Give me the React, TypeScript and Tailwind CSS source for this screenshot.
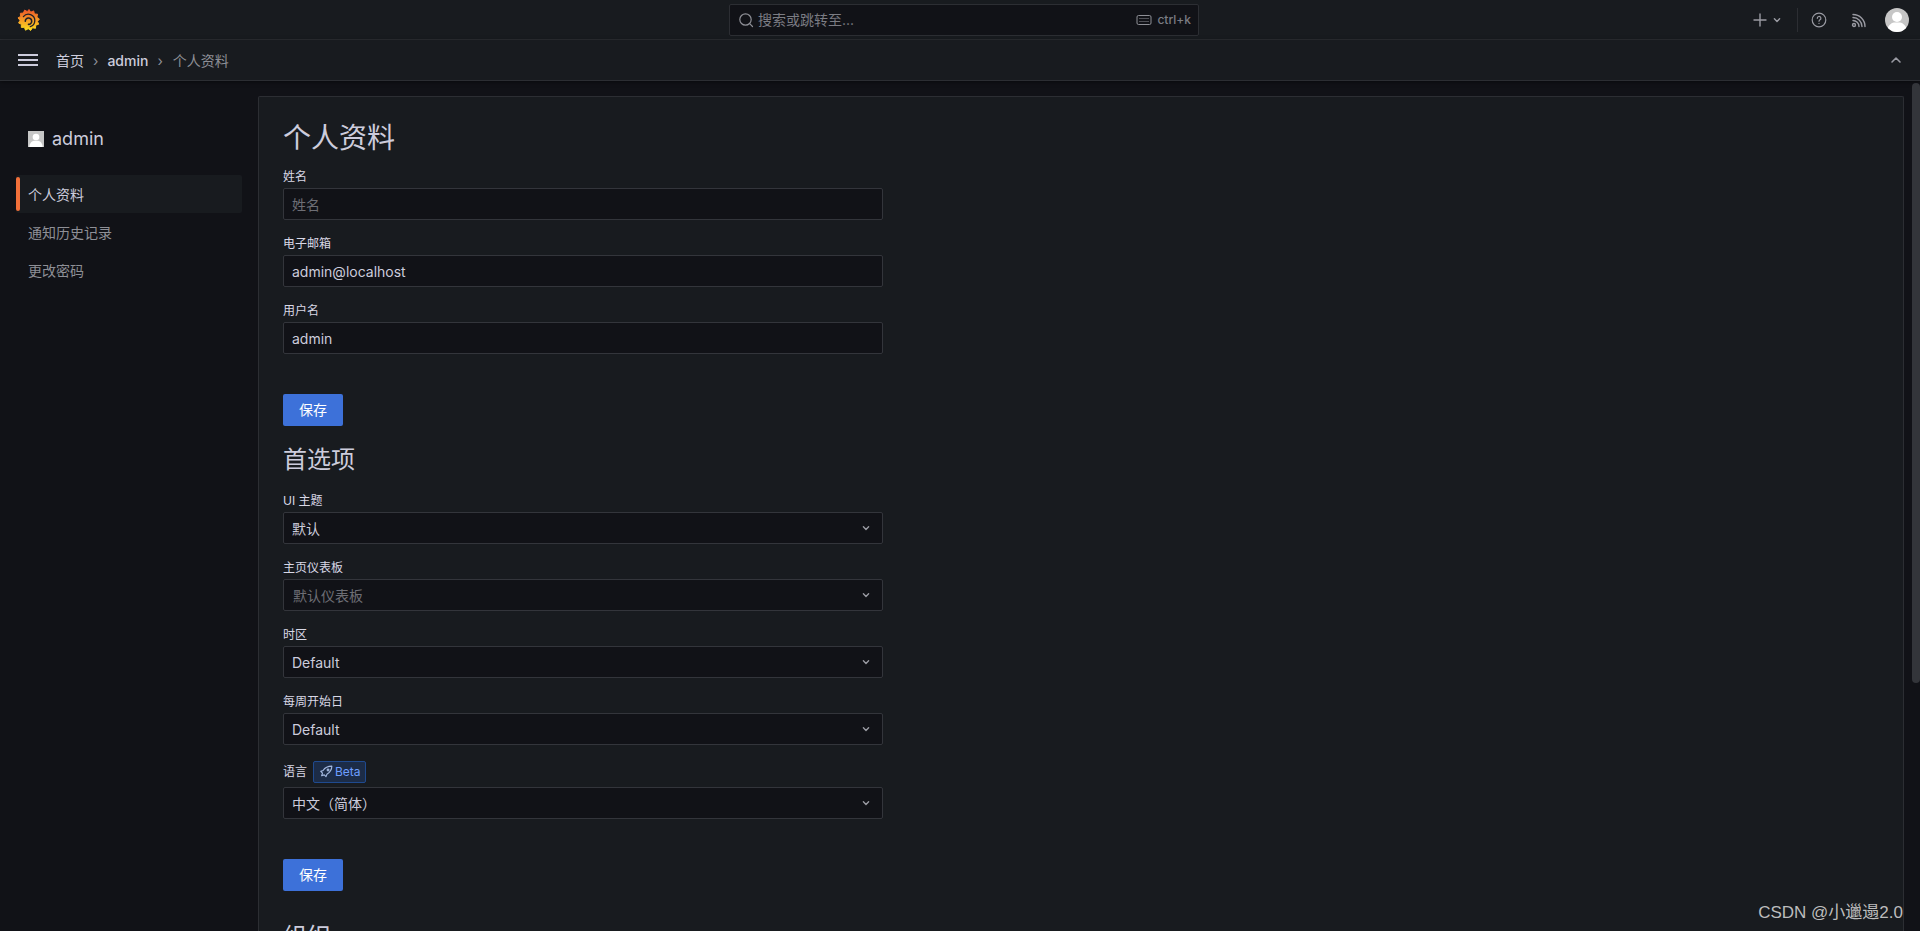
const uiFont = { fontFamily: 'Inter, "Noto Sans CJK SC", sans-serif' }

const GrafanaLogo = () => (
    <svg width="24" height="24" viewBox="0 0 24 24">
        <defs>
            <linearGradient id="grafana-grad" x1="0.5" y1="1" x2="0.5" y2="0">
                <stop offset="0" stopColor="#fcdf1f" />
                <stop offset="1" stopColor="#f0562a" />
            </linearGradient>
        </defs>
        <path
            d="M13 1.500l1.700 2.700 3-1.300.7 3.100 3.100.2-.6 3.100 2.500 1.700-1.900 2.400 1.200 2.800-3 1-.2 3.100-3.100-.5-1.700 2.600-2.500-1.700-2.700 1.500-1.100-2.900-3.100.1.100-3.100-2.800-1.300 1.400-2.700-2-2.400 2.700-1.500-.4-3.100 3.100-.3 1.200-2.900 2.700 1.500z"
            fill="url(#grafana-grad)"
            stroke="url(#grafana-grad)"
            strokeWidth="1"
            strokeLinejoin="round"
        />
        <path
            d="M7.400 8.600A6.400 6.400 0 0 1 18.800 13a6.400 6.400 0 0 1-4.500 5.700"
            fill="none"
            stroke="#20202a"
            strokeWidth="1.300"
            strokeLinecap="round"
        />
        <path
            d="M9.300 13.300a3.200 3.200 0 1 1 3.200 3.100"
            fill="none"
            stroke="#20202a"
            strokeWidth="1.600"
            strokeLinecap="round"
        />
    </svg>
)

const Chevron = ({ className }: { className: string }) => (
    <svg className={className} width="16" height="16" viewBox="0 0 16 16" fill="none" stroke="currentColor" strokeWidth="1.400" strokeLinecap="round" strokeLinejoin="round">
        <path d="M5.400 6.800 8 9.400l2.600-2.600" />
    </svg>
)

const Avatar = ({ className }: { className: string }) => (
    <svg className={className} viewBox="0 0 24 24">
        <rect width="24" height="24" fill="#c6c6c6" />
        <circle cx="12" cy="9" r="5" fill="#fff" />
        <path d="M2 24c0-6 4-9 7-9.500h6c3 .5 7 3.500 7 9.500z" fill="#fff" />
    </svg>
)

const Field = ({ label, value, placeholder }: { label: string; value?: string; placeholder?: string }) => (
    <div className="mb-[16px] w-[600px]">
        <div className="mb-[4px] h-[15px] text-[12px] leading-[15px] text-[#d8d8e6]">{label}</div>
        <div className="flex h-[32px] items-center rounded-[2px] border border-[#33353b] bg-[#111217] px-[8px] text-[14px]">
            {value ? <span className="text-[#ccccdc]">{value}</span> : <span className="text-[#6d6e75]">{placeholder}</span>}
        </div>
    </div>
)

const SelectField = ({ label, value, muted, badge }: { label: string; value: string; muted?: boolean; badge?: boolean }) => (
    <div className="mb-[16px] w-[600px]">
        <div className={badge ? 'mb-[4px] flex h-[22px] items-center gap-[6px] text-[12px] text-[#d8d8e6]' : 'mb-[4px] h-[15px] text-[12px] leading-[15px] text-[#d8d8e6]'}>
            {label}
            {badge && (
                <span className="flex h-[22px] w-[53px] items-center gap-[2px] rounded-[2px] border border-[#1f4a8f] bg-[#1c2c47] pl-[5px] text-[12px] text-[#6e9fff]">
                    <svg width="14" height="14" viewBox="0 0 24 24" fill="none" stroke="#a3b8de" strokeWidth="2" strokeLinejoin="round">
                        <path d="M22 2c-6.500 0-11.500 2-15 7.500l-4 1.500 3 3-1.500 4.500 4.500-1.500 3 3 1.500-4c5-3.500 8.500-7.500 8.500-14z" />
                        <circle cx="15.500" cy="8.500" r="1.500" />
                    </svg>
                    Beta
                </span>
            )}
        </div>
        <div className="flex h-[32px] items-center justify-between rounded-[2px] border border-[#33353b] bg-[#111217] px-[8px] text-[14px]">
            <span className={muted ? 'pl-[1px] text-[#6d6e75]' : 'text-[#ccccdc]'}>{value}</span>
            <Chevron className="text-[#9a9ba3]" />
        </div>
    </div>
)

const SaveButton = () => (
    <button className="flex h-[32px] w-[60px] items-center justify-center rounded-[2px] bg-[#3d71d9] pb-[1px] text-[14px] text-white">保存</button>
)

export default function App() {
    return (
        <div className="relative flex h-screen flex-col overflow-hidden bg-[#111217]" style={uiFont}>
            <header className="flex h-[40px] shrink-0 items-center border-b border-[#2c2e33] bg-[#181b1f] pr-[11px] pl-[16px]">
                <div className="w-[713px] shrink-0">
                    <GrafanaLogo />
                </div>
                <div className="flex h-[32px] w-[470px] shrink-0 items-center rounded-[2px] border border-[#2c2e33] bg-[#111217] pr-[7px] pl-[8px] text-[14px] text-[#7b7c83]">
                    <svg className="mr-[4px]" width="16" height="16" viewBox="0 0 16 16" fill="none" stroke="#8e8f96" strokeWidth="1.200" strokeLinecap="round">
                        <circle cx="7.500" cy="7.500" r="5.700" />
                        <path d="m11.700 11.700 2.800 2.800" />
                    </svg>
                    <span>搜索或跳转至...</span>
                    <svg className="mr-[5px] ml-auto" width="16" height="16" viewBox="0 0 16 16" fill="none" stroke="#8e8f96" strokeWidth="1">
                        <rect x="1" y="3.500" width="14" height="9" rx="1.500" />
                        <path d="M3.500 6.500h9M3.500 9.500h9" strokeDasharray="1 1" />
                    </svg>
                    <span className="text-[12px] font-medium">ctrl+k</span>
                </div>
                <div className="ml-auto flex items-center">
                    <svg width="16" height="16" viewBox="0 0 16 16" fill="none" stroke="#9a9ba3" strokeWidth="1.400" strokeLinecap="round">
                        <path d="M8 2v12M2 8h12" />
                    </svg>
                    <Chevron className="ml-[1px] text-[#9a9ba3]" />
                    <div className="mr-[13px] ml-[12px] h-[24px] w-px bg-[#2c2e33]" />
                    <svg width="16" height="16" viewBox="0 0 16 16" fill="none" stroke="#9a9ba3" strokeWidth="1.200" strokeLinecap="round">
                        <circle cx="8" cy="8" r="6.800" />
                        <path d="M6.300 6.300a1.800 1.800 0 1 1 2.700 1.500c-.6.400-1 .7-1 1.400M8 11.300v.1" />
                    </svg>
                    <div className="ml-[24px]">
                        <svg width="16" height="16" viewBox="0 0 16 16" fill="none" stroke="#9a9ba3" strokeWidth="1.400" strokeLinecap="round">
                            <circle cx="3" cy="13" r="1.500" />
                            <path d="M2 8.500a6 6 0 0 1 6 6M2 5.500a9 9 0 0 1 9 9M2 2.500a12 12 0 0 1 12 12" />
                        </svg>
                    </div>
                    <Avatar className="ml-[18px] h-[24px] w-[24px] rounded-full" />
                </div>
            </header>

            <div className="flex h-[41px] shrink-0 items-center border-b border-[#2c2e33] bg-[#181b1f] pr-[16px] pl-[18px] shadow-[0_1px_4px_rgba(0,0,0,0.5)]">
                <div className="mr-[18px] flex w-[20px] flex-col gap-[3px]">
                    <div className="h-[2px] bg-[#ccccdc]" />
                    <div className="h-[2px] bg-[#ccccdc]" />
                    <div className="h-[2px] bg-[#ccccdc]" />
                </div>
                <nav className="flex items-center text-[14px]">
                    <span className="text-[#ccccdc]">首页</span>
                    <span className="mx-[9px] text-[#8e8f96]">›</span>
                    <span className="font-medium text-[#ccccdc]">admin</span>
                    <span className="mx-[9px] text-[#8e8f96]">›</span>
                    <span className="pl-[1px] text-[#8e8f96]">个人资料</span>
                </nav>
                <svg className="ml-auto" width="16" height="16" viewBox="0 0 16 16" fill="none" stroke="#9a9ba3" strokeWidth="1.600" strokeLinecap="round" strokeLinejoin="round">
                    <path d="M4 10l4-4 4 4" />
                </svg>
            </div>

            <div className="flex min-h-0 flex-1 pt-[15px] pr-[16px]">
                <aside className="w-[258px] shrink-0 pr-[16px] pl-[16px]">
                    <div className="mt-[35px] mb-[28px] flex items-center pl-[12px]">
                        <Avatar className="h-[16px] w-[16px]" />
                        <span className="ml-[8px] text-[18px] leading-[16px] text-[#ccccdc]">admin</span>
                    </div>
                    <div className="relative flex h-[38px] items-center rounded-[2px] bg-[#181b1f] pl-[12px] text-[14px] text-[#ccccdc]">
                        <div className="absolute top-[2px] bottom-[2px] left-0 w-[4px] rounded-[2px] bg-[#f2703a]" />
                        个人资料
                    </div>
                    <div className="flex h-[38px] items-center pl-[12px] text-[14px] text-[#8e8f96]">通知历史记录</div>
                    <div className="flex h-[38px] items-center pl-[12px] text-[14px] text-[#8e8f96]">更改密码</div>
                </aside>

                <main className="min-w-0 flex-1 rounded-t-[2px] border border-b-0 border-[#2c2e33] bg-[#181b1f] pt-[24px] pl-[24px]">
                    <h1 className="mb-[14px] text-[28px] leading-[34px] text-[#ccccdc]">个人资料</h1>
                    <Field label="姓名" placeholder="姓名" />
                    <Field label="电子邮箱" value="admin@localhost" />
                    <Field label="用户名" value="admin" />
                    <div className="pt-[24px]">
                        <SaveButton />
                    </div>
                    <h3 className="mt-[19px] mb-[19px] text-[24px] leading-[29px] text-[#ccccdc]">首选项</h3>
                    <SelectField label="UI 主题" value="默认" />
                    <SelectField label="主页仪表板" value="默认仪表板" muted />
                    <SelectField label="时区" value="Default" />
                    <SelectField label="每周开始日" value="Default" />
                    <SelectField label="语言" value="中文（简体）" badge />
                    <div className="pt-[24px]">
                        <SaveButton />
                    </div>
                    <h3 className="mt-[31px] text-[24px] leading-[29px] text-[#ccccdc]">组织</h3>
                </main>
            </div>

            <div className="absolute top-[83px] right-0 h-[600px] w-[8px] rounded-[4px] bg-[#33353a]" />
            <div className="absolute right-[17px] bottom-[7px] text-[17px] leading-[22px] text-[#bdbdbd]" style={{ fontFamily: '"Liberation Sans", "Noto Sans CJK SC", sans-serif' }}>
                CSDN @小邋遢2.0
            </div>
        </div>
    )
}
